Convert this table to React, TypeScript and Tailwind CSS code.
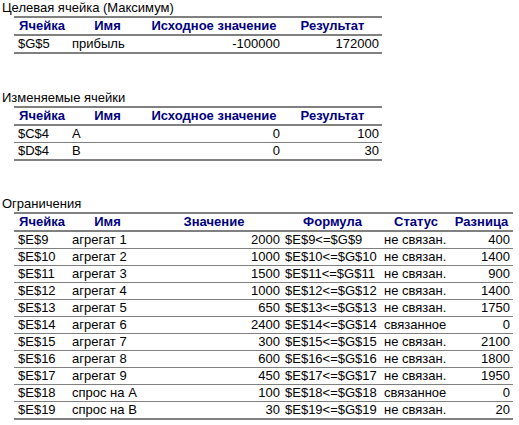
import React from "react";

type Cell = { text: string; align: "l" | "r" | "c" };

const HDR = "text-[#000080] font-bold";

function Row({ cells, cols, header, topCls }: { cells: Cell[]; cols: string; header?: boolean; topCls: string }) {
  return (
    <div className={`grid ${cols} h-[16px] leading-[16px] ${topCls} box-content border-[#808080]`}>
      {cells.map((c, i) => (
        <div
          key={i}
          className={`whitespace-nowrap overflow-visible ${header ? HDR : "text-black"} ${
            c.align === "c" ? "text-center" : c.align === "r" ? "text-right pr-[3px]" : i === 0 ? "pl-[4px]" : "pl-[2px]"
          }`}
        >
          {c.text}
        </div>
      ))}
    </div>
  );
}

function Table({ title, headers, rows, aligns, cols, width }: { title: string; headers: string[]; rows: string[][]; aligns: ("l" | "r")[]; cols: string; width: string }) {
  return (
    <div>
      <div className="h-[16px] leading-[16px] pl-[2px] text-black">{title}</div>
      <div className={`ml-[14px] ${width} border-t-2 border-b-2 border-[#808080]`}>
        <Row cols={cols} header topCls="" cells={headers.map((h) => ({ text: h, align: "c" as const }))} />
        {rows.map((r, ri) => (
          <Row
            key={ri}
            cols={cols}
            topCls={ri === 0 ? "border-t-2" : "border-t"}
            cells={r.map((t, ci) => ({ text: t, align: aligns[ci] }))}
          />
        ))}
      </div>
    </div>
  );
}

export default function App() {
  const cols4 = "grid-cols-[56px_75px_138px_99px]";
  const cols6 = "grid-cols-[56px_75px_138px_99px_68px_63px]";
  const constraints: string[][] = [
    ["$E$9", "агрегат 1", "2000", "$E$9<=$G$9", "не связан.", "400"],
    ["$E$10", "агрегат 2", "1000", "$E$10<=$G$10", "не связан.", "1400"],
    ["$E$11", "агрегат 3", "1500", "$E$11<=$G$11", "не связан.", "900"],
    ["$E$12", "агрегат 4", "1000", "$E$12<=$G$12", "не связан.", "1400"],
    ["$E$13", "агрегат 5", "650", "$E$13<=$G$13", "не связан.", "1750"],
    ["$E$14", "агрегат 6", "2400", "$E$14<=$G$14", "связанное", "0"],
    ["$E$15", "агрегат 7", "300", "$E$15<=$G$15", "не связан.", "2100"],
    ["$E$16", "агрегат 8", "600", "$E$16<=$G$16", "не связан.", "1800"],
    ["$E$17", "агрегат 9", "450", "$E$17<=$G$17", "не связан.", "1950"],
    ["$E$18", "спрос на A", "100", "$E$18<=$G$18", "связанное", "0"],
    ["$E$19", "спрос на B", "30", "$E$19<=$G$19", "не связан.", "20"],
  ];
  return (
    <div className="w-[519px] h-[425px] bg-white overflow-hidden text-[13px]" style={{ fontFamily: '"Liberation Sans", Arial, sans-serif' }}>
      <Table
        title="Целевая ячейка (Максимум)"
        headers={["Ячейка", "Имя", "Исходное значение", "Результат"]}
        rows={[["$G$5", "прибыль", "-100000", "172000"]]}
        aligns={["l", "l", "r", "r"]}
        cols={cols4}
        width="w-[368px]"
      />
      <div className="h-[36px]" />
      <Table
        title="Изменяемые ячейки"
        headers={["Ячейка", "Имя", "Исходное значение", "Результат"]}
        rows={[
          ["$C$4", "A", "0", "100"],
          ["$D$4", "B", "0", "30"],
        ]}
        aligns={["l", "l", "r", "r"]}
        cols={cols4}
        width="w-[368px]"
      />
      <div className="h-[35px]" />
      <Table
        title="Ограничения"
        headers={["Ячейка", "Имя", "Значение", "Формула", "Статус", "Разница"]}
        rows={constraints}
        aligns={["l", "l", "r", "l", "l", "r"]}
        cols={cols6}
        width="w-[499px]"
      />
    </div>
  );
}
